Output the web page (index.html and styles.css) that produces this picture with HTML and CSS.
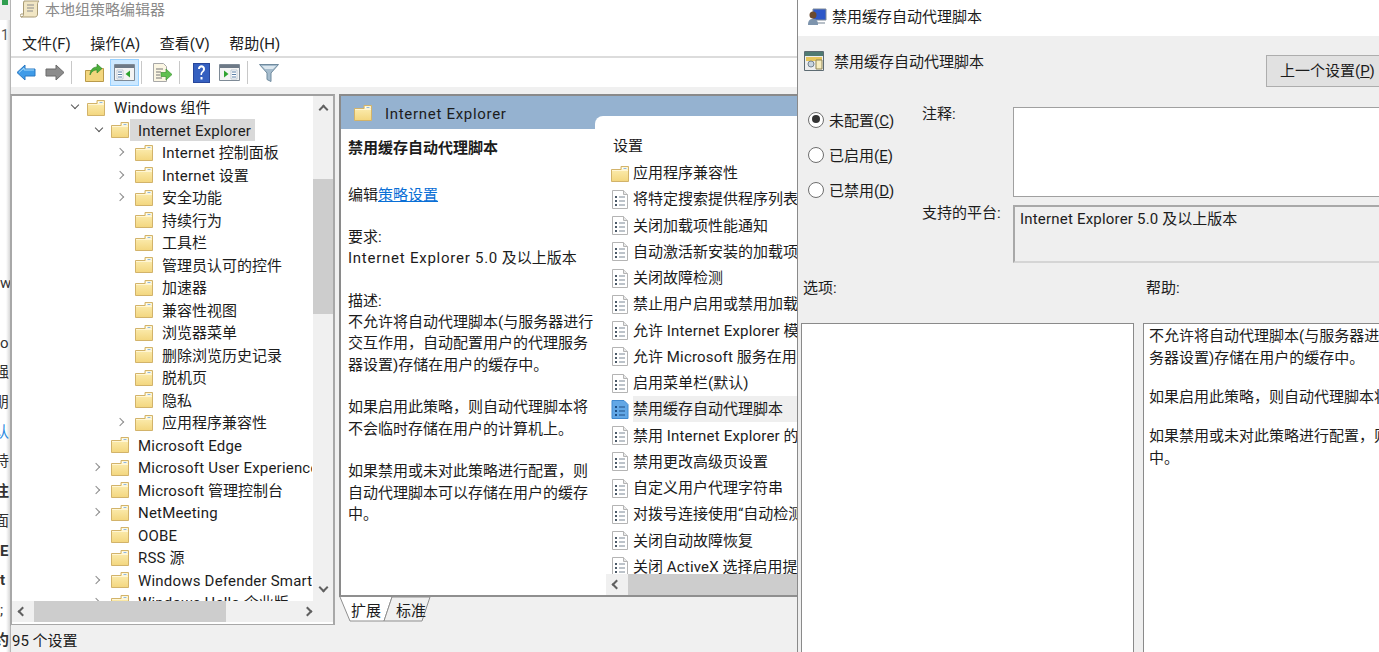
FILE: index.html
```html
<!DOCTYPE html>
<html lang="zh-CN">
<head>
<meta charset="utf-8">
<title>本地组策略编辑器</title>
<link rel="stylesheet" href="styles.css">
</head>
<body>
<svg class="defs" width="0" height="0">
  <defs>
    <linearGradient id="fy" x1="0" y1="0" x2="0" y2="1"><stop offset="0" stop-color="#fdf0b8"/><stop offset="1" stop-color="#f3d67e"/></linearGradient>
    <symbol id="folder" viewBox="0 0 18 17">
      <path d="M.5 4.500h9.500V1.500h7.500v15H.5z" fill="url(#fy)" stroke="#d2b36a"/>
      <path d="M11 2.500h5.500v2H11z" fill="#ffffff"/>
      <path d="M12.500 3h3v1h-3z" fill="#8fb8dc"/>
      <path d="M1 5.500h16" stroke="#fff6d4"/>
    </symbol>
    <symbol id="doc" viewBox="0 0 18 19">
      <path d="M1.500.5h11l4 4v14h-15z" fill="#fff" stroke="#b4b4b4"/>
      <path d="M12.500.5v4h4" fill="#e8e8e8" stroke="#b4b4b4"/>
      <path d="M4 6h2v2H4zM4 10h2v2H4zM4 14h2v2H4z" fill="#4c5a68"/>
      <path d="M8 7h6M8 11h6M8 15h6" stroke="#7a8794"/>
    </symbol>
    <symbol id="docsel" viewBox="0 0 18 19">
      <path d="M1 .5h12l4 4v14H1z" fill="#62a7e6" stroke="#3f88cf"/>
      <path d="M4 6h2v2H4zM4 10h2v2H4zM4 14h2v2H4z" fill="#1e4f86"/>
      <path d="M8 7h6M8 11h6M8 15h6" stroke="#1e4f86"/>
    </symbol>
  </defs>
</svg>

<div class="backdrop">
  <div class="bd-top"><span class="bd-green"></span></div>
  <div class="bd-one">1</div>
  <div class="bd-lines">
    <div class="bd-l">w</div>
    <div class="bd-gap"></div>
    <div class="bd-l">o</div>
    <div class="bd-l shift">强</div>
    <div class="bd-l shift">朋</div>
    <div class="bd-l shift blue">认</div>
    <div class="bd-l shift">持</div>
    <div class="bd-l shift bold">注</div>
    <div class="bd-l shift">面</div>
    <div class="bd-l bold">E</div>
    <div class="bd-l bold">t</div>
    <div class="bd-l">;</div>
    <div class="bd-l shift bold">约</div>
  </div>
</div>

<div class="main-win">
  <div class="titlebar">
    <svg class="ti" width="20" height="20" viewBox="0 0 20 20"><path d="M4 1h15c-1 1-1.500 2-1.500 3v10c0 2-1 3-3 3H1c1.500 0 2.500-1 2.500-2.500V3z" fill="#f1e6c4" stroke="#a89a74"/><path d="M7 5h7M7 8h7M7 11h6" stroke="#8c8c8c"/><path d="M1 17c-1-1-1-2 0-3h3" fill="none" stroke="#a89a74"/></svg>
    <span class="title-text">本地组策略编辑器</span>
  </div>
  <div class="menubar"><span>文件(F)</span><span>操作(A)</span><span>查看(V)</span><span>帮助(H)</span></div>
  <div class="toolbar">
    <svg class="tb back" width="20" height="17" viewBox="0 0 20 17"><path d="M9 1 1 8.500 9 16v-4h10V5H9z" fill="#3f9be8" stroke="#2b78c2"/><path d="M3 8.500 8 4v2h10" fill="none" stroke="#a6dcfb"/></svg>
    <svg class="tb fwd" width="20" height="17" viewBox="0 0 20 17"><path d="M11 1l8 7.500-8 7.500v-4H1V5h10z" fill="#8c8c8c" stroke="#6a6a6a"/></svg>
    <i class="sep s1"></i>
    <svg class="tb up" width="19" height="19" viewBox="0 0 19 19"><path d="M.5 7.500h6l2-2h10v13H.5z" fill="#f3d67e" stroke="#b99a4a"/><path d="M5 12c0-5 3-8 7-8V1l5 4.500L12 10V7c-3 0-5 1-7 5z" fill="#4caf3c" stroke="#2f7f27" stroke-width=".6"/></svg>
    <span class="tb-on"><svg width="21" height="17" viewBox="0 0 21 17"><path d="M.5.500h20v16H.5z" fill="#f4f4f4" stroke="#7e8a96"/><path d="M1 1h19v3H1z" fill="#6d7986"/><path d="M3 6h6v9H3z" fill="#fff" stroke="#9fb0c0" stroke-width=".6"/><path d="M4 8h4M4 10.500h4M4 13h4" stroke="#5b7fa6"/><path d="M16 6.500v7l-4.500-3.500z" fill="#2fa32f"/></svg></span>
    <i class="sep s2"></i>
    <svg class="tb exp" width="21" height="20" viewBox="0 0 21 20"><path d="M1.500.5h10l3 3v15h-13z" fill="#fbf6e3" stroke="#a8a8a8"/><path d="M4 6h7M4 9h5M4 12h4M4 15h6" stroke="#777"/><path d="M9 9.500h5V6l6 5.500-6 5.500v-3.500H9z" fill="#5fc04f" stroke="#3e9334" stroke-width=".7"/></svg>
    <i class="sep s3"></i>
    <svg class="tb hlp" width="17" height="20" viewBox="0 0 17 20"><path d="M0 0h17v20H0z" fill="#27469b"/><path d="M1 1h15v18H1z" fill="#3560c0"/><path d="M5 6c0-5 7-5 7 0 0 3-3 3-3 6H7.500c0-4 2.500-3.500 2.500-6 0-2-3-2-3 0zM7.500 14h2v2.500h-2z" fill="#fff"/></svg>
    <svg class="tb win" width="21" height="17" viewBox="0 0 21 17"><path d="M.5.500h20v16H.5z" fill="#f4f4f4" stroke="#7e8a96"/><path d="M1 1h19v3H1z" fill="#6d7986"/><path d="M12 6h6v9h-6z" fill="#fff" stroke="#9fb0c0" stroke-width=".6"/><path d="M13 8h4M13 10.500h4M13 13h4" stroke="#5b7fa6"/><path d="M5 6.500v7l4.500-3.500z" fill="#2fa32f"/></svg>
    <i class="sep s4"></i>
    <svg class="tb flt" width="20" height="18" viewBox="0 0 20 18"><path d="M.5.500h19L12 9v8.500l-4-2V9z" fill="#a5bccd" stroke="#6f8a9e"/><path d="M3 2h14l-3 3H6z" fill="#dce7ef"/></svg>
  </div>

  <div class="workspace">
    <div class="tree-pane">
      <div class="tree-top">
        <div class="tree">
          <div class="row l0"><i class="cv down"></i><svg class="fo"><use href="#folder"/></svg><span><em>Windows</em> 组件</span></div>
          <div class="row l1"><i class="cv down"></i><svg class="fo"><use href="#folder"/></svg><span class="sel"><em>Internet Explorer</em></span></div>
          <div class="row l2"><i class="cv right"></i><svg class="fo"><use href="#folder"/></svg><span><em>Internet</em> 控制面板</span></div>
          <div class="row l2"><i class="cv right"></i><svg class="fo"><use href="#folder"/></svg><span><em>Internet</em> 设置</span></div>
          <div class="row l2"><i class="cv right"></i><svg class="fo"><use href="#folder"/></svg><span>安全功能</span></div>
          <div class="row l2"><i class="cv"></i><svg class="fo"><use href="#folder"/></svg><span>持续行为</span></div>
          <div class="row l2"><i class="cv"></i><svg class="fo"><use href="#folder"/></svg><span>工具栏</span></div>
          <div class="row l2"><i class="cv"></i><svg class="fo"><use href="#folder"/></svg><span>管理员认可的控件</span></div>
          <div class="row l2"><i class="cv"></i><svg class="fo"><use href="#folder"/></svg><span>加速器</span></div>
          <div class="row l2"><i class="cv"></i><svg class="fo"><use href="#folder"/></svg><span>兼容性视图</span></div>
          <div class="row l2"><i class="cv"></i><svg class="fo"><use href="#folder"/></svg><span>浏览器菜单</span></div>
          <div class="row l2"><i class="cv"></i><svg class="fo"><use href="#folder"/></svg><span>删除浏览历史记录</span></div>
          <div class="row l2"><i class="cv"></i><svg class="fo"><use href="#folder"/></svg><span>脱机页</span></div>
          <div class="row l2"><i class="cv"></i><svg class="fo"><use href="#folder"/></svg><span>隐私</span></div>
          <div class="row l2"><i class="cv right"></i><svg class="fo"><use href="#folder"/></svg><span>应用程序兼容性</span></div>
          <div class="row l1"><i class="cv"></i><svg class="fo"><use href="#folder"/></svg><span><em>Microsoft Edge</em></span></div>
          <div class="row l1"><i class="cv right"></i><svg class="fo"><use href="#folder"/></svg><span><em>Microsoft User Experience Virtualization</em></span></div>
          <div class="row l1"><i class="cv right"></i><svg class="fo"><use href="#folder"/></svg><span><em>Microsoft</em> 管理控制台</span></div>
          <div class="row l1"><i class="cv right"></i><svg class="fo"><use href="#folder"/></svg><span><em>NetMeeting</em></span></div>
          <div class="row l1"><i class="cv"></i><svg class="fo"><use href="#folder"/></svg><span><em>OOBE</em></span></div>
          <div class="row l1"><i class="cv"></i><svg class="fo"><use href="#folder"/></svg><span><em>RSS</em> 源</span></div>
          <div class="row l1"><i class="cv right"></i><svg class="fo"><use href="#folder"/></svg><span><em>Windows Defender SmartScreen</em></span></div>
          <div class="row l1"><i class="cv right"></i><svg class="fo"><use href="#folder"/></svg><span><em>Windows Hello</em> 企业版</span></div>
        </div>
        <div class="vscroll">
          <i class="arrow-up"></i>
          <div class="vthumb"></div>
          <i class="arrow-down"></i>
        </div>
      </div>
      <div class="hscroll tree-h">
        <i class="arrow-left"></i>
        <div class="hthumb"></div>
        <i class="arrow-right"></i>
      </div>
    </div>

    <div class="right-col">
      <div class="detail-pane">
        <div class="detail-head">
          <svg class="fo head-fo"><use href="#folder"/></svg>
          <span>Internet Explorer</span>
        </div>
        <div class="detail-body">
          <div class="desc">
            <h1>禁用缓存自动代理脚本</h1>
            <p class="edit">编辑<a>策略设置</a></p>
            <p>要求:<br><span class="spaced">Internet Explorer 5.0</span> 及以上版本</p>
            <p>描述:<br>不允许将自动代理脚本(与服务器进行<br>交互作用，自动配置用户的代理服务<br>器设置)存储在用户的缓存中。</p>
            <p>如果启用此策略，则自动代理脚本将<br>不会临时存储在用户的计算机上。</p>
            <p>如果禁用或未对此策略进行配置，则<br>自动代理脚本可以存储在用户的缓存<br>中。</p>
          </div>
          <div class="settings">
            <div class="settings-head">设置</div>
            <div class="set-list">
              <div class="set-row"><svg class="fo"><use href="#folder"/></svg><span>应用程序兼容性</span></div>
              <div class="set-row"><svg class="dc"><use href="#doc"/></svg><span>将特定搜索提供程序列表添加到用户</span></div>
              <div class="set-row"><svg class="dc"><use href="#doc"/></svg><span>关闭加载项性能通知</span></div>
              <div class="set-row"><svg class="dc"><use href="#doc"/></svg><span>自动激活新安装的加载项目</span></div>
              <div class="set-row"><svg class="dc"><use href="#doc"/></svg><span>关闭故障检测</span></div>
              <div class="set-row"><svg class="dc"><use href="#doc"/></svg><span>禁止用户启用或禁用加载项</span></div>
              <div class="set-row"><svg class="dc"><use href="#doc"/></svg><span>允许 <em>Internet Explorer</em> 模式</span></div>
              <div class="set-row"><svg class="dc"><use href="#doc"/></svg><span>允许 <em>Microsoft</em> 服务在用户</span></div>
              <div class="set-row"><svg class="dc"><use href="#doc"/></svg><span>启用菜单栏(默认)</span></div>
              <div class="set-row current"><svg class="dc"><use href="#docsel"/></svg><span>禁用缓存自动代理脚本</span></div>
              <div class="set-row"><svg class="dc"><use href="#doc"/></svg><span>禁用 <em>Internet Explorer</em> 的开发</span></div>
              <div class="set-row"><svg class="dc"><use href="#doc"/></svg><span>禁用更改高级页设置</span></div>
              <div class="set-row"><svg class="dc"><use href="#doc"/></svg><span>自定义用户代理字符串</span></div>
              <div class="set-row"><svg class="dc"><use href="#doc"/></svg><span>对拨号连接使用“自动检测”</span></div>
              <div class="set-row"><svg class="dc"><use href="#doc"/></svg><span>关闭自动故障恢复</span></div>
              <div class="set-row"><svg class="dc"><use href="#doc"/></svg><span>关闭 <em>ActiveX</em> 选择启用提示</span></div>
            </div>
            <div class="hscroll set-h"><i class="arrow-left"></i><div class="hthumb wide"></div></div>
          </div>
        </div>
      </div>
      <div class="tabs">
        <svg class="tab-svg" width="100" height="25" viewBox="0 0 100 25"><path d="M1 0l10 24h34L53 0" fill="#fff" stroke="#8f8f8f"/><path d="M45 24l8-24h38l-8 24z" fill="#f0f0f0" stroke="#8f8f8f"/></svg>
        <span class="tab-a">扩展</span><span class="tab-b">标准</span>
      </div>
    </div>
  </div>
  <div class="statusbar">95 个设置</div>
</div>

<div class="dialog">
  <div class="dlg-title">
    <svg width="20" height="18" viewBox="0 0 20 18"><path d="M6 1h13v11H6z" fill="#2d57c8" stroke="#7e8a96"/><path d="M8 14h10v2H8z" fill="#b8c0c8"/><circle cx="6" cy="7" r="3.500" fill="#6b4a2f"/><path d="M1 17c0-5 2-6 5-6s5 1 5 6z" fill="#7d94ad"/></svg>
    <span>禁用缓存自动代理脚本</span>
  </div>
  <div class="dlg-body">
    <div class="dlg-head">
      <div class="dlg-name">
        <svg width="20" height="20" viewBox="0 0 20 20"><path d="M.5.500h19v19H.5z" fill="#eee" stroke="#5d6b72"/><path d="M1 1h18v4H1z" fill="#4f7a72"/><path d="M2 6h16v4H2z" fill="#e6c65c"/><circle cx="7" cy="13" r="3" fill="#c7d4e0" stroke="#74838f"/><path d="M12 9h6v9h-6z" fill="#f7edc0" stroke="#8f8455"/></svg>
        <span>禁用缓存自动代理脚本</span>
      </div>
      <div class="prev-btn">上一个设置(<u>P</u>)</div>
    </div>
    <div class="dlg-top">
      <div class="radios">
        <label class="radio on"><i></i><span>未配置(<u>C</u>)</span></label>
        <label class="radio"><i></i><span>已启用(<u>E</u>)</span></label>
        <label class="radio"><i></i><span>已禁用(<u>D</u>)</span></label>
      </div>
      <div class="fields">
        <div class="field note"><span class="fl">注释:</span><div class="box"></div></div>
        <div class="field plat"><span class="fl">支持的平台:</span><div class="box ro"><em>Internet Explorer 5.0</em> 及以上版本</div></div>
      </div>
    </div>
    <div class="dlg-labels"><span class="lb-a">选项:</span><span>帮助:</span></div>
    <div class="dlg-panels">
      <div class="panel opts"></div>
      <div class="panel help">
        <div>不允许将自动代理脚本(与服务器进行交互作用，自动配置用户的代理服</div>
        <div>务器设置)存储在用户的缓存中。</div>
        <div class="blank"></div>
        <div>如果启用此策略，则自动代理脚本将不会临时存储在用户的计算机上。</div>
        <div class="blank"></div>
        <div>如果禁用或未对此策略进行配置，则自动代理脚本可以存储在用户的缓存</div>
        <div>中。</div>
      </div>
    </div>
  </div>
</div>
</body>
</html>
```

FILE: styles.css
```css
* { box-sizing: border-box; }
html, body { margin: 0; height: 652px; overflow: hidden; }
body {
  position: relative;
  width: 1379px;
  background: #f0f0f0;
  color: #1c1c1c;
  font: 15px/1.2 Roboto, "Noto Sans CJK SC", sans-serif;
}
i { font-style: normal; display: block; }
em { font-style: normal; letter-spacing: .2px; }
.defs { position: absolute; }

/* backdrop window */
.backdrop {
  position: absolute; left: 0; top: 0; width: 10px; height: 652px;
  background: linear-gradient(90deg, #fff 0, #fff 6px, #d8d8d8 10px);
  overflow: hidden;
  color: #333;
}
.bd-top { height: 20px; background: #eeeeee; }
.bd-green { display: block; width: 6px; height: 5px; margin-left: 2px; background: #2f9e4f; }
.bd-one { height: 249px; padding-top: 7px; margin-left: 1px; font-size: 14px; color: #555; }
.bd-l { height: 29.7px; line-height: 29.7px; white-space: nowrap; }
.bd-gap { height: 30px; }
.bd-l.shift { margin-left: -6px; }
.bd-l.blue { color: #2a8ae0; }
.bd-l.bold { font-weight: 700; }

/* main window */
.main-win {
  position: absolute; left: 10px; top: 0; width: 787px; height: 652px;
  display: flex; flex-direction: column;
  background: #f0f0f0;
  border-left: 1px solid #b5b5b5;
}
.titlebar {
  height: 32px; flex: none; background: #fff;
  display: flex; align-items: flex-start; padding: 0 0 0 9px; gap: 5px;
}
.title-text { color: #8a8a8a; line-height: 21px; }
.menubar {
  height: 24px; flex: none; background: #fff;
  display: flex; gap: 19.5px; padding-left: 11px; line-height: 25px;
}
.toolbar {
  height: 31px; flex: none; background: #fff;
  border-top: 2px solid #dcdcdc;
  display: flex; align-items: center; padding-left: 5px;
}
.tb { flex: none; }
.fwd { margin-left: 9px; }
.sep { width: 1px; height: 23px; background: #c8c8c8; flex: none; }
.s1 { margin-left: 6px; }
.up { margin-left: 13px; }
.tb-on {
  display: flex; align-items: center; justify-content: center;
  width: 29px; height: 27px; margin-left: 6px;
  background: #cce8ff; border: 1px solid #99d1ff; flex: none;
}
.s2 { margin-left: 2px; }
.exp { margin-left: 10px; }
.s3 { margin-left: 6px; }
.hlp { margin-left: 13px; }
.win { margin-left: 9px; }
.s4 { margin-left: 7px; }
.flt { margin-left: 11px; }

.workspace {
  flex: 1; min-height: 0; display: flex; gap: 4px;
  padding-top: 7px;
}
.tree-pane {
  width: 325px; height: 532px; flex: none; margin-left: -1px;
  border: 2px solid #a8a8a8; border-top-color: #a0a0a0;
  background: #fff; display: flex; flex-direction: column;
}
.tree-top { height: 505px; display: flex; overflow: hidden; flex: none; }
.tree { width: 300px; flex: none; overflow: hidden; }
.row {
  height: 22.5px; display: flex; align-items: center; white-space: nowrap; overflow: hidden;
}
.row span { padding: 2px 4px 0; line-height: 20.5px; margin-left: 5px; }
.row .sel { background: #d9d9d9; margin-left: 1px; padding: 2px 4px 0 8px; }
.row.l0 { padding-left: 57px; }
.row.l1 { padding-left: 81px; }
.row.l2 { padding-left: 105px; }
.fo { width: 18px; height: 17px; flex: none; }
.cv { width: 18px; height: 22px; flex: none; position: relative; }
.cv.right::after, .cv.down::after {
  content: ""; position: absolute; left: 0; top: 8px; width: 5px; height: 5px;
  border-right: 1.500px solid #8c8c8c; border-bottom: 1.500px solid #8c8c8c;
}
.cv.right::after { transform: rotate(-45deg); }
.cv.down::after { transform: rotate(45deg); border-color: #555; left: 3px; top: 6px; }

.vscroll {
  width: 21px; flex: none; background: #f0f0f0; margin-left: 1px;
  display: flex; flex-direction: column; align-items: center;
}
.arrow-up, .arrow-down, .arrow-left, .arrow-right { flex: none; width: 7px; height: 7px; border: solid #606060; border-width: 2px 0 0 2px; }
.arrow-up { transform: rotate(45deg); margin-top: 10px; }
.arrow-down { transform: rotate(225deg); margin-top: auto; margin-bottom: 10px; }
.arrow-left { transform: rotate(-45deg); }
.arrow-right { transform: rotate(135deg); margin-left: auto; margin-right: 22px; }
.vthumb { width: 21px; height: 135px; background: #cdcdcd; margin-top: 66px; }
.hscroll { display: flex; align-items: center; background: #f0f0f0; flex: none; }
.tree-h { height: 21px; padding-left: 7px; }
.hthumb { width: 192px; height: 21px; background: #cdcdcd; margin-left: 8px; }
.hthumb.wide { flex: 1; height: 22px; }

.right-col { flex: 1; min-width: 0; display: flex; flex-direction: column; }
.detail-pane {
  height: 503px; flex: none;
  border: 2px solid #8a8a8a; border-right: 0; border-bottom-color: #8f8f8f;
  background: #fff; display: flex; flex-direction: column; overflow: hidden;
  position: relative;
}
.detail-head {
  height: 33px; flex: none; background: #95b2d0;
  display: flex; align-items: center; padding: 0 0 0 13px; gap: 13px;
  letter-spacing: .7px;
}
.detail-head span { padding-top: 2px; }
.detail-body { flex: 1; display: flex; min-height: 0; }
.desc { width: 254px; flex: none; padding: 9px 0 0 7px; line-height: 21.35px; white-space: nowrap; }
.desc h1 { font-size: 15px; font-weight: 700; margin: 0; line-height: 21px; }
.desc p { margin: 0 0 21.35px; }
.desc .edit { margin-top: 26px; margin-bottom: 20.35px; }
.desc a { color: #0a6fd6; text-decoration: underline; }
.spaced { letter-spacing: .75px; }
.settings {
  flex: 1; min-width: 0; margin-top: -13px; background: #fff; border-top-left-radius: 8px;
  display: flex; flex-direction: column; position: relative; overflow: hidden;
}
.settings-head { padding: 18px 0 0 18px; height: 44px; line-height: 24px; flex: none; }
.set-list { flex: 1; min-height: 0; overflow: hidden; padding-left: 16px; }
.set-row {
  height: 26.25px; display: flex; align-items: center; white-space: nowrap; gap: 4px;
}
.set-row.current span { flex: 1; background: #efefef; height: 26px; line-height: 26px; }
.dc { width: 18px; height: 19px; flex: none; }
.set-h { height: 21px; padding-left: 7px; margin-left: 11px; }
.tabs { height: 27px; flex: none; position: relative; display: flex; padding: 2px 0 0 12px; gap: 15px; line-height: 24px; }
.tab-svg { position: absolute; left: 0; top: 0; }
.tab-a, .tab-b { position: relative; }

.statusbar { height: 27px; flex: none; padding-left: 1px; line-height: 32px; background: #f0f0f0; margin-top: auto; }

/* dialog */
.dialog {
  position: absolute; left: 797px; top: 0; width: 582px; height: 652px;
  border-left: 1px solid #8a8a8a;
  display: flex; flex-direction: column; background: #efefef;
  overflow: hidden;
}
.dlg-title {
  height: 36px; flex: none; background: #fff; padding: 0 0 2px 9px;
  display: flex; align-items: center; gap: 5px; white-space: nowrap;
}
.dlg-body { flex: 1; min-height: 0; display: flex; flex-direction: column; }
.dlg-head { height: 51px; flex: none; display: flex; }
.dlg-name { display: flex; align-items: flex-start; gap: 10px; padding: 15px 0 0 6px; line-height: 22px; }
.prev-btn {
  margin: 19px 0 0 auto; width: 113px; height: 32px; flex: none;
  background: #e1e1e1; border: 1px solid #adadad; border-right: 0;
  padding-left: 13px; line-height: 31px; white-space: nowrap;
}
.dlg-top { display: flex; height: 176px; flex: none; }
.radios { width: 124px; flex: none; display: flex; flex-direction: column; padding: 15px 0 0 10px; }
.radio { display: flex; align-items: center; height: 35px; gap: 5px; white-space: nowrap; }
.radio span { padding-top: 2px; }
.radio i { width: 16px; height: 16px; border: 1.500px solid #6e6e6e; border-radius: 50%; background: #fff; flex: none; position: relative; }
.radio.on i::after { content: ""; position: absolute; left: 2.500px; top: 2.500px; width: 8px; height: 8px; border-radius: 50%; background: #333; }
.fields { flex: 1; min-width: 0; padding-top: 20px; margin-right: -6px; }
.field { display: flex; }
.fl { width: 91px; flex: none; white-space: nowrap; line-height: 18px; }
.note { height: 90px; }
.note .fl { margin-top: -2px; }
.box { flex: 1; border: 1px solid #a0a0a0; background: #fff; }
.plat { margin-top: 8px; height: 58px; }
.plat .fl { margin-top: -1px; }
.box.ro { background: #efefef; border: 2px solid #d5d5d5; border-top-color: #a8a8a8; border-left-color: #a8a8a8; padding: 0 0 0 5px; line-height: 24px; }
.dlg-labels { height: 60px; flex: none; display: flex; padding: 14px 0 0 5px; line-height: 22px; }
.lb-a { width: 343px; flex: none; }
.dlg-panels { flex: 1; display: flex; padding-left: 3px; gap: 9px; min-height: 0; margin-right: -6px; }
.panel { border: 1px solid #8a8a8a; background: #fff; border-bottom: 0; }
.opts { width: 333px; flex: none; }
.help { flex: 1; min-width: 0; padding: 2px 0 0 5px; overflow: hidden; white-space: nowrap; line-height: 21.7px; }
.blank { height: 17.500px; }
```
